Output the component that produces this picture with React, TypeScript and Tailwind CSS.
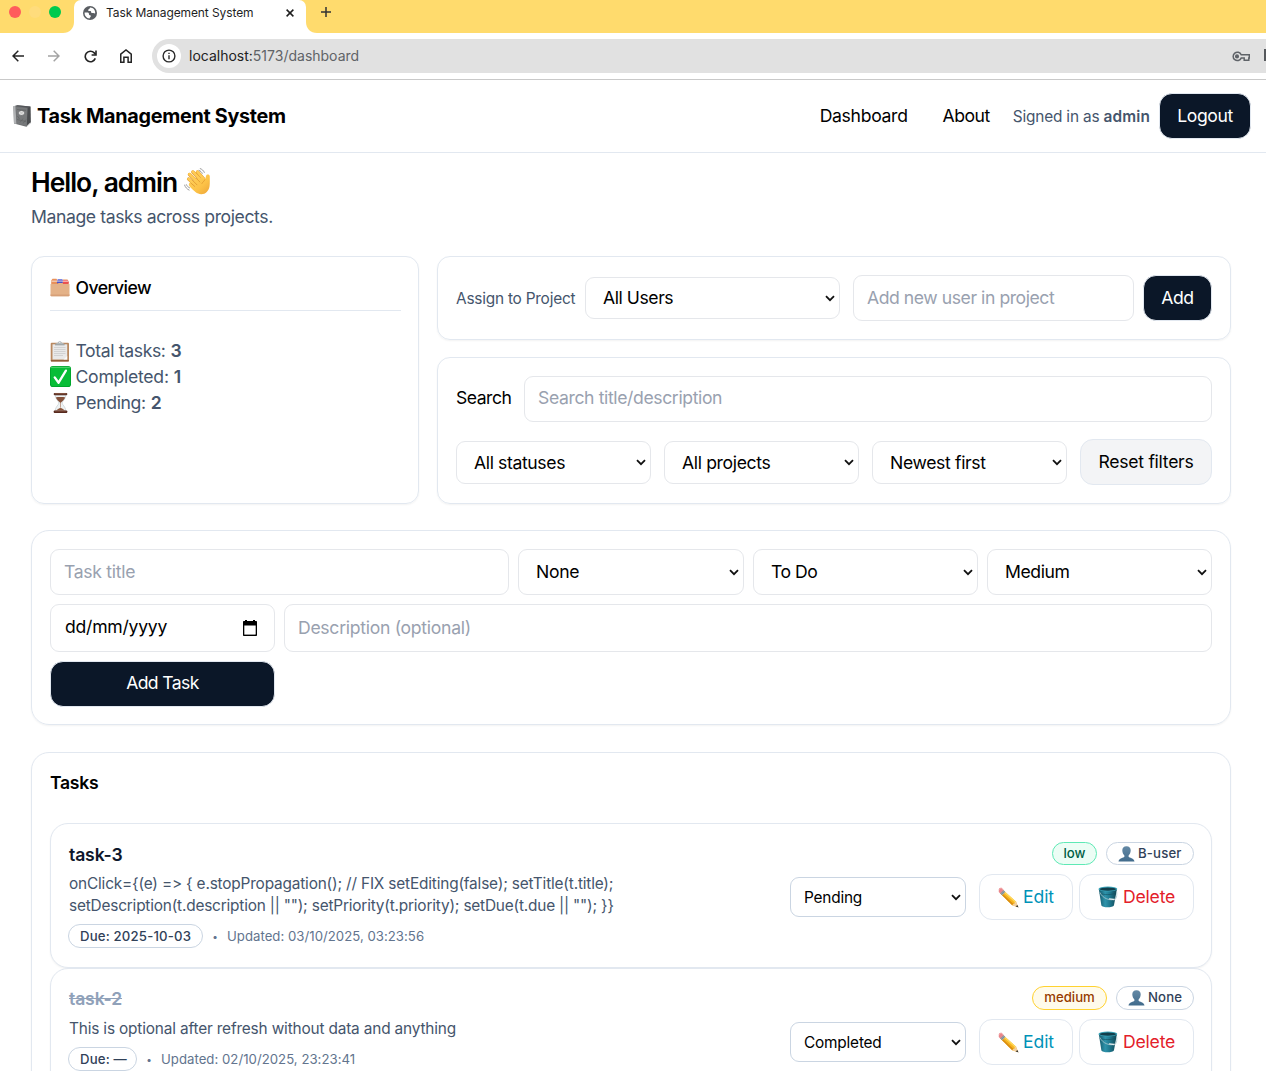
import type { ReactNode } from "react";

/* ---------- browser icons ---------- */

function Globe() {
  return (
    <svg width="14" height="14" viewBox="0 0 14 14">
      <circle cx="7" cy="7" r="7" fill="#5a5e63" />
      <path d="M1.6 6.6h2.8c1 0 1.6.7 1.6 1.6 0 .7.6.9 1.2 1.1.8.3.7 1.4.1 1.9-.5.4-.7.8-.7 1.3C3.500 12.400 1.400 9.800 1.600 6.600z" fill="#fff" />
      <path d="M7 1.500c-.1 1.300-.8 1.500-1.500 1.900-.8.5-.4 1.500.6 1.500h1.100c.5 0 .9.4.9 1s.5 1.100 1.100 1.100h1.200c.7 0 .8.6 1.800.3.300-2.900-1.700-5.800-5.200-5.800z" fill="#fff" />
    </svg>
  );
}

function CloseIcon() {
  return (
    <svg width="8" height="8" viewBox="0 0 8 8" stroke="#1f1f1f" strokeWidth="1.500">
      <path d="M.6.600 7.400 7.400M7.400.600.600 7.400" />
    </svg>
  );
}

function PlusIcon() {
  return (
    <svg width="10" height="10" viewBox="0 0 10 10" stroke="#333" strokeWidth="1.500">
      <path d="M5 0v10M0 5h10" />
    </svg>
  );
}

function ArrowIcon({ forward = false }: { forward?: boolean }) {
  return (
    <svg
      width="12"
      height="12"
      viewBox="0 0 12 12"
      fill="none"
      stroke={forward ? "#a3a3a3" : "#242424"}
      strokeWidth="1.500"
      className={forward ? "rotate-180" : ""}
    >
      <path d="M12 6H1.200M6.300.700 1 6l5.300 5.300" />
    </svg>
  );
}

function ReloadIcon() {
  return (
    <svg width="13" height="13" viewBox="0 0 13 13" fill="none" stroke="#242424" strokeWidth="1.600">
      <path d="M11.300 8.400A5.200 5.200 0 1 1 10.200 2.900L11.600 4.400" />
      <path d="M12 .6V5H7.600" />
    </svg>
  );
}

function HomeIcon() {
  return (
    <svg width="12" height="14" viewBox="0 0 12 14" fill="none" stroke="#242424" strokeWidth="1.500">
      <path d="M.75 5.100 6 1l5.250 4.100v8.100H8.100V8.300H3.900v4.900H.75z" />
    </svg>
  );
}

function InfoIcon() {
  return (
    <svg width="14" height="14" viewBox="0 0 14 14" fill="none" stroke="#2b2b2b" strokeWidth="1.400">
      <circle cx="7" cy="7" r="5.900" />
      <path d="M7 6.200v4M7 3.700v1.400" />
    </svg>
  );
}

function KeyIcon() {
  return (
    <svg width="18" height="11" viewBox="0 0 18 11" fill="none" stroke="#5f6368" strokeWidth="1.500">
      <path d="M9.200 3.700A4.200 4.200 0 1 0 9.200 7.100H12.200V9.300H16.800V6.900H17.300V3.700z" />
      <circle cx="5" cy="5.400" r="1.300" fill="#5f6368" />
    </svg>
  );
}

function TabFlare({ side }: { side: "left" | "right" }) {
  return (
    <svg width="11" height="11" viewBox="0 0 11 11" className="self-end" fill="#fff">
      <path d={side === "left" ? "M11 0v11H0C6.500 11 11 6.500 11 0z" : "M0 0v11h11C4.500 11 0 6.500 0 0z"} />
    </svg>
  );
}

/* ---------- pictographs ---------- */

function Notebook() {
  return (
    <svg width="18" height="22" viewBox="0 0 18 22">
      <path d="M.4 1.200 4.500.300 17.400 1.600 17.700 17.800 13.400 21.700 1 18.600z" fill="#6c6e70" />
      <path d="M.4 1.200 2.400.800 3.500 19.100 1 18.600z" fill="#b0b2b4" />
      <path d="M2.400 1 4.500.300 17.400 1.600 14.600 2.700z" fill="#54565a" />
      <path d="M14.600 2.700 17.400 1.600 17.700 17.800 13.800 21.400z" fill="#4a4c4f" />
      <path d="M14 20.900 17.500 17.500" stroke="#c4c4c4" strokeWidth=".9" />
      <path d="M3 1.900 14.300 3.200 13.600 20.900 3.900 18.500z" fill="#77797b" />
      <path d="M4 14.500 13 16.500M4 4.500l9 .800M7 17.500l3-4M10 18.500l3-4M4.500 11l2 3" stroke="#626466" strokeWidth=".8" />
      <ellipse cx="8.500" cy="8" rx="3" ry="2.300" fill="#ededed" stroke="#4e5052" strokeWidth=".5" />
      <path d="M7 7.600h3M7.400 8.600h2.200" stroke="#a5a5a5" strokeWidth=".5" />
    </svg>
  );
}

function WavingHand() {
  return (
    <svg width="27" height="27" viewBox="0 0 28 28" fill="none" strokeLinecap="round">
      <defs>
        <linearGradient id="skin" x1="0" y1="0" x2="1" y2="1">
          <stop offset="0" stopColor="#ffd35e" />
          <stop offset=".6" stopColor="#fcc247" />
          <stop offset="1" stopColor="#eda437" />
        </linearGradient>
      </defs>
      <path d="M4.800 11.500 13 18.500M5.700 6.700 15 15.500M9.200 4.100 18 13M14 4.100 20.500 11.500" stroke="#df962f" strokeWidth="3.500" />
      <path d="M4.700 11.200 13 18.500M5.600 6.400 15 15.500M9.100 3.800 18 13M13.900 3.800 20.500 11.500" stroke="#ffcc55" strokeWidth="2.700" />
      <path
        d="M7.500 15 12 11.500l6.500-1.500 3 2.200c1-1.300.9-2.800 1.400-4.200.7-2 3.800-1.600 3.800.5 0 3.500.3 7-.2 10.300-.8 5-4.200 8.400-8.700 8.300-4.200-.1-7.600-3.500-12.100-8.300-1.600-1.800.2-4.900 1.800-3.800z"
        fill="url(#skin)"
      />
      <path d="M7 15.500 11 19M9 13l4.500 4.500M12.500 10.500l4 4M21.500 12.300c-.5 1.700-2.200 2.100-2.900 3.700" stroke="#dc932c" strokeWidth=".8" />
      <path d="M16.800.6c1.900.7 3.500 2 4.300 4M15.600 2.500c1.700.7 2.700 1.600 3.300 3.100M.6 17.700c.7 2.200 2.400 4.200 4.700 5.200M2.500 17.300c.7 1.600 1.700 2.500 3.300 3.300" stroke="#8d8d8d" strokeWidth=".9" />
    </svg>
  );
}

function Dividers() {
  return (
    <svg width="20" height="19" viewBox="0 0 20 19">
      <path d="M1.200 2.600 2.500.800H6.500L7.500 2.600H12L13 1.500H17.500L18.600 3.500V8H1.200z" fill="#e8915b" />
      <path d="M7.600 1.200h4.700l1 2v1.500H6.800z" fill="#5661d6" />
      <path d="M13.200 1.900h4.500l1 2v1.700h-6z" fill="#ee5757" />
      <path d="M1.500 2.700h17v.9h-17z" fill="#f7e8df" />
      <path d="M7 3.800h5.200v1.500H7z" fill="#4b53c8" />
      <path d="M13 4.300h5.300v1.500H13z" fill="#e94e50" />
      <path d="M.5 6h7.300l1-.9h3.500l.8.9h6.400v11.300c0 .6-.3.900-.9.900H1.400c-.6 0-.9-.3-.9-.9z" fill="#e4b288" />
      <path d="M.5 16.500h19v.8c0 .6-.3.900-.9.900H1.400c-.6 0-.9-.3-.9-.9z" fill="#d7a078" />
    </svg>
  );
}

function Clipboard() {
  return (
    <svg width="20" height="21" viewBox="0 0 20 21">
      <rect x=".7" y="1.800" width="18.300" height="18.800" rx="1" fill="#b98961" />
      <path d="M.9 19h17.900v.9c0 .4-.2.700-.7.700H1.600c-.4 0-.7-.3-.7-.7z" fill="#8f5c38" />
      <path d="M2.500 3.300h14.700v15.200H2.500z" fill="#e9e9e9" />
      <path d="M4 6.500h11.500M4 8.500h11.500M4 10.500h11.500M4 12.500h11.500M4 14.500h9" stroke="#cfcfcf" strokeWidth=".9" />
      <path d="M13.500 18.500l3.700-3.500v3.500z" fill="#fafafa" />
      <path d="M5 3.800c0-1.200 1-1.700 2.500-1.800C8 .8 8.800.3 9.800.3s1.800.5 2.300 1.700c1.500.1 2.500.6 2.500 1.800z" fill="#b3babd" />
      <path d="M5 3.400h9.600v.9H5z" fill="#8f979b" />
      <circle cx="9.800" cy="1.500" r=".6" fill="#fff" />
    </svg>
  );
}

function CheckMark() {
  return (
    <svg width="21" height="21" viewBox="0 0 21 21">
      <rect width="21" height="21" rx="2.800" fill="#00a52c" />
      <rect x=".9" y=".9" width="19.200" height="19.200" rx="2.200" fill="#08bd37" />
      <path d="M1.500 1.300h18" stroke="#62d97e" strokeWidth=".9" strokeLinecap="round" />
      <path d="M4.700 11.400 8.600 16.700 15.900 4.600" fill="none" stroke="#fff" strokeWidth="2.300" strokeLinecap="round" strokeLinejoin="round" />
    </svg>
  );
}

function Hourglass() {
  return (
    <svg width="15" height="22" viewBox="0 0 16 22">
      <path d="M2.300 2.500C2.300 7 6.300 9 6.300 11S2.300 15 2.300 19.500h11.400c0-4.500-4-6.500-4-8.500s4-4 4-8.500z" fill="#eef2f3" stroke="#bcc6ca" strokeWidth=".6" />
      <path d="M3 5.200c1.700-.7 8.300-.7 10 0-.7 2.500-3.500 4-4.700 5.600h-.6C6.500 9.200 3.700 7.700 3 5.200z" fill="#84513a" />
      <path d="M8 10v6" stroke="#9c6347" strokeWidth=".6" />
      <path d="M3.500 19c.8-1.400 2.900-2.500 4.500-2.800 1.600.3 3.700 1.400 4.500 2.800z" fill="#8d563b" />
      <rect x=".8" y=".2" width="14.400" height="2.400" rx=".8" fill="#633729" />
      <rect x=".8" y="19" width="14.400" height="2.600" rx=".8" fill="#56291e" />
      <path d="M2.200.8h11.500M2.200 19.700h11.500" stroke="#9a6550" strokeWidth=".6" />
    </svg>
  );
}

function Person() {
  return (
    <svg width="17" height="16" viewBox="0 0 17 16" className="shrink-0">
      <defs>
        <linearGradient id="bust" x1="0" y1="0" x2="0" y2="1">
          <stop offset="0" stopColor="#6489a5" />
          <stop offset="1" stopColor="#416b8c" />
        </linearGradient>
      </defs>
      <path
        d="M8.500.3c2.800 0 4.300 1.800 4.200 4.300-.1 2.300-1 4-2.100 4.900v1.200c.4 1 5.700 1.300 5.900 4.900H.5c.2-3.600 5.500-3.900 5.900-4.900V9.500C5.300 8.600 4.400 6.900 4.300 4.600 4.200 2.100 5.700.3 8.500.3z"
        fill="url(#bust)"
      />
    </svg>
  );
}

function Pencil() {
  return (
    <svg width="21" height="21" viewBox="0 0 21 21">
      <path d="M5.300 3.300 17.900 14.500 20.300 20.300 14.200 18.300 2.300 6.600z" fill="#f7b520" />
      <path d="M5.300 3.300 17.900 14.500 16.900 15.500 4.400 4.300z" fill="#ffd95a" />
      <path d="M3.300 5.500 15.500 17.100 14.200 18.300 2.300 6.600z" fill="#d98d12" />
      <path d="M17.900 14.500 20.300 20.300 14.200 18.300 15.300 16.900 16.500 16.700 16.700 15.300z" fill="#f2d0a2" />
      <path d="M19.300 17.900 20.600 20.600 17.700 19.500z" fill="#303030" />
      <path d="M5 2.800 7.400 4.900 4.200 8.200 2 6.200z" fill="#9caab3" />
      <path d="M5.700 3.500 2.700 6.800M6.600 4.300 3.500 7.500" stroke="#617078" strokeWidth=".5" />
      <path d="M.8 3.500C.3 1.800 2 .4 3.700 1L5.700 2.900 2.200 6.500 1 5.300C.6 4.800.8 4.100.8 3.500z" fill="#e9868b" />
      <path d="M1.300 2.900C1.600 1.700 2.600 1.100 3.600 1.300L5 2.600" stroke="#f9b4b4" strokeWidth=".7" fill="none" />
    </svg>
  );
}

function Bucket() {
  return (
    <svg width="20" height="22" viewBox="0 0 20 22">
      <defs>
        <linearGradient id="steel" x1="0" y1="0" x2="1" y2="0">
          <stop offset="0" stopColor="#14586a" />
          <stop offset=".35" stopColor="#2e93ab" />
          <stop offset=".6" stopColor="#1f7990" />
          <stop offset="1" stopColor="#104552" />
        </linearGradient>
      </defs>
      <path d="M.8 3 3.400 19.400C4.200 21.800 15 21.800 15.900 19.400L19 3z" fill="url(#steel)" />
      <ellipse cx="9.900" cy="3" rx="9.400" ry="2.400" fill="#3aa3b8" />
      <ellipse cx="9.900" cy="3.200" rx="8.100" ry="1.600" fill="#123e4b" />
      <path d="M1.700 7.200C6 9.200 13.500 9 18.300 7" stroke="#124e5d" strokeWidth=".6" fill="none" />
      <path d="M2 6.500C4.500 12.500 12.500 15.500 17.700 12.700 18.900 11.500 18.900 8 18.700 5.500" stroke="#a9c8ce" strokeWidth=".8" fill="none" />
      <path d="M11.500 12.800 16 13.500" stroke="#dfe9eb" strokeWidth="1.300" strokeLinecap="round" />
    </svg>
  );
}

/* ---------- controls ---------- */

function Chevron() {
  return (
    <svg width="10" height="7" viewBox="0 0 10 7" fill="none" stroke="#111" strokeWidth="1.800" className="shrink-0">
      <path d="M1 1.200 5 5.200 9 1.200" />
    </svg>
  );
}

function Select({ label, className }: { label: string; className: string }) {
  return (
    <button className={`flex shrink-0 items-center justify-between rounded-[9px] border bg-white pr-[4px] text-left ${className}`}>
      <span>{label}</span>
      <Chevron />
    </button>
  );
}

function Input({ placeholder, className }: { placeholder: string; className: string }) {
  return (
    <input
      placeholder={placeholder}
      className={`block min-w-0 rounded-[9px] border border-gray-200 bg-white pr-[14px] pb-[2px] pl-[13px] placeholder:text-gray-400 ${className}`}
    />
  );
}

function PrimaryButton({ children, className }: { children: ReactNode; className: string }) {
  return (
    <button className={`shrink-0 rounded-[13px] border border-slate-200 bg-[#0b1728] text-center text-white ${className}`}>
      {children}
    </button>
  );
}

type Task = {
  title: string;
  done: boolean;
  lines: { text: string; className: string }[];
  due: string;
  dueClass: string;
  updated: string;
  priority: string;
  priorityClass: string;
  user: string;
  userClass: string;
  status: string;
  cardClass: string;
  pillsClass: string;
};

const tasks: Task[] = [
  {
    title: "task-3",
    done: false,
    lines: [
      { text: "onClick={(e) => { e.stopPropagation(); // FIX setEditing(false); setTitle(t.title);", className: "tracking-[-0.177px]" },
      { text: 'setDescription(t.description || ""); setPriority(t.priority); setDue(t.due || ""); }}', className: "tracking-[-0.194px]" },
    ],
    due: "2025-10-03",
    dueClass: "w-[135px]",
    updated: "03/10/2025, 03:23:56",
    priority: "low",
    priorityClass: "w-[45px] border-[#5ee9b5] bg-emerald-50 text-[#006045]",
    user: "B-user",
    userClass: "w-[88px]",
    status: "Pending",
    cardClass: "h-[145px]",
    pillsClass: "mt-px h-[23px]",
  },
  {
    title: "task-2",
    done: true,
    lines: [{ text: "This is optional after refresh without data and anything", className: "tracking-[-0.169px]" }],
    due: "—",
    dueClass: "w-[69px]",
    updated: "02/10/2025, 23:23:41",
    priority: "medium",
    priorityClass: "w-[75px] border-[#ffd230] bg-amber-50 text-[#973c00]",
    user: "None",
    userClass: "w-[78px]",
    status: "Completed",
    cardClass: "h-[124px]",
    pillsClass: "h-[24px]",
  },
];

function TaskCard({ task }: { task: Task }) {
  return (
    <article className={`flex justify-between rounded-[18px] border border-slate-200 bg-white pt-[17px] pr-[17px] pl-[17px] shadow-xs ${task.cardClass}`}>
      <div>
        <h3
          className={`h-[26px] pl-px font-semibold tracking-[-0.139px] ${
            task.done ? "leading-[25px] text-slate-400 line-through" : "leading-[27px] text-slate-900"
          }`}
        >
          {task.title}
        </h3>
        <div className="mt-[6px] pl-px text-[15.4px] leading-[22px] text-slate-600 [font-variant-ligatures:none] [font-feature-settings:'calt'_0]">
          {task.lines.map((line) => (
            <p key={line.text} className={`whitespace-nowrap ${line.className}`}>
              {line.text}
            </p>
          ))}
        </div>
        <div className="mt-[6px] flex h-[26px] items-center text-[13.2px] text-slate-500">
          <span className={`flex h-[24px] items-center rounded-full border border-slate-300 pb-px pl-[11px] font-medium tracking-[0.17px] text-slate-700 ${task.dueClass}`}>
            Due: {task.due}
          </span>
          <span className="w-[24px] text-center text-[10px]">•</span>
          <span className="pb-px tracking-[0.02px]">Updated: {task.updated}</span>
        </div>
      </div>
      <div className="flex flex-col items-end">
        <div className={`flex items-stretch gap-[9px] text-[13.2px] font-medium ${task.pillsClass}`}>
          <span className={`flex items-center justify-center rounded-full border leading-none ${task.priorityClass}`}>
            {task.priority}
          </span>
          <span className={`flex items-center gap-[3px] rounded-full border border-slate-300 pl-[11px] leading-none tracking-[0.15px] text-slate-700 ${task.userClass}`}>
            <Person />
            {task.user}
          </span>
        </div>
        <div className="mt-[9px] flex items-center">
          <Select label={task.status} className="mr-[13px] h-[40px] w-[176px] border-slate-300 pt-px pl-[13px] text-[15.4px] tracking-[-0.2px]" />
          <button className="mr-[6px] flex h-[46px] w-[94px] items-center rounded-[13px] border border-slate-200 pl-[18px] tracking-[-0.1px] text-[#0092b8]">
            <Pencil />
            <span className="ml-[4px]">Edit</span>
          </button>
          <button className="flex h-[46px] w-[115px] items-center rounded-[13px] border border-slate-200 pl-[18px] tracking-[-0.2px] text-[#e3202a]">
            <Bucket />
            <span className="ml-[5px]">Delete</span>
          </button>
        </div>
      </div>
    </article>
  );
}

function BrowserChrome() {
  return (
    <div>
      <div className="flex h-[33px] bg-[#ffdb6d]">
        <div className="flex w-[63px] items-start gap-[8px] pt-[6px] pl-[9px]">
          <i className="size-[12px] shrink-0 rounded-full bg-[#ff5c5c]" />
          <i className="size-[12px] shrink-0 rounded-full bg-[#ffdc7c]" />
          <i className="size-[12px] shrink-0 rounded-full bg-[#00ca4e]" />
        </div>
        <TabFlare side="left" />
        <div className="flex h-[33px] w-[232px] items-start rounded-t-[7px] bg-white pt-[6px] pl-[9px] text-[12px] leading-[14px] text-[#1f1f1f]">
          <Globe />
          <span className="ml-[9px] w-[180px] whitespace-nowrap tracking-[-0.1px]">Task Management System</span>
          <span className="pt-[3px]">
            <CloseIcon />
          </span>
        </div>
        <TabFlare side="right" />
        <span className="pt-[7px] pl-[4px]">
          <PlusIcon />
        </span>
      </div>
      <div className="flex h-[47px] items-center border-b border-[#c9c9c9] bg-white">
        <div className="flex w-[152px] items-center pl-[12px]">
          <ArrowIcon />
          <span className="ml-[24px]">
            <ArrowIcon forward />
          </span>
          <span className="ml-[24px]">
            <ReloadIcon />
          </span>
          <span className="ml-[23px]">
            <HomeIcon />
          </span>
        </div>
        <div className="flex h-[34px] flex-1 items-center rounded-l-full bg-[#e1e1e1] pl-[5px] text-[14px]">
          <span className="flex size-[24px] items-center justify-center rounded-full bg-white">
            <InfoIcon />
          </span>
          <span className="ml-[8px] flex-1 text-[#606367]">
            <span className="text-[#222]">localhost:</span>5173/dashboard
          </span>
          <KeyIcon />
          <span className="mb-[3px] ml-[14px] h-[12px] w-[2px] bg-[#55585c]" />
        </div>
      </div>
    </div>
  );
}

export default function App() {
  return (
    <div className="h-[1071px] w-[1266px] overflow-hidden bg-white font-['Inter',sans-serif] text-[17.6px] leading-[26px] text-black">
      <BrowserChrome />

      <header className="flex h-[73px] items-center border-b border-slate-200 pr-[15px] pl-[13px]">
        <Notebook />
        <h1 className="ml-[6px] flex-1 text-[19.8px] font-bold tracking-[-0.3px]">Task Management System</h1>
        <nav className="flex items-center">
          <a className="mr-[35px] tracking-[-0.31px]">Dashboard</a>
          <a className="mr-[23px] tracking-[-0.5px]">About</a>
        </nav>
        <span className="mr-[9px] pt-[2px] text-[15.4px] tracking-[-0.18px] text-slate-600">
          Signed in as <b className="font-semibold tracking-[0.15px]">admin</b>
        </span>
        <PrimaryButton className="h-[46px] w-[92px] tracking-[-0.4px]">Logout</PrimaryButton>
      </header>

      <main className="pt-[11px] pr-[35px] pl-[31px]">
        <h2 className="flex h-[36px] items-center pb-px text-[26.4px] font-semibold tracking-[-1px]">
          <span className="w-[153px]">Hello, admin</span>
          <WavingHand />
        </h2>
        <p className="mt-[4px] tracking-[-0.4px] text-slate-600">Manage tasks across projects.</p>

        <div className="mt-[26px] flex gap-[18px]">
          <section className="h-[248px] w-[388px] shrink-0 rounded-[13px] border border-slate-200 pt-[18px] pr-[17px] pl-[18px] shadow-xs">
            <h3 className="flex h-[36px] items-start border-b border-slate-200 font-medium tracking-[-0.55px]">
              <span className="mt-[3px] w-[25.5px]">
                <Dividers />
              </span>
              Overview
            </h3>
            <ul className="mt-[27px] text-slate-600">
              <li className="flex h-[26px] items-center tracking-[-0.37px]">
                <span className="w-[25.5px]">
                  <Clipboard />
                </span>
                Total tasks:<b className="ml-[5px] font-semibold">3</b>
              </li>
              <li className="flex h-[26px] items-center tracking-[-0.26px]">
                <span className="w-[25.5px] pb-px">
                  <CheckMark />
                </span>
                Completed:<b className="ml-[5px] font-semibold">1</b>
              </li>
              <li className="flex h-[26px] items-center tracking-[-0.36px]">
                <span className="w-[25.5px] pl-[3px]">
                  <Hourglass />
                </span>
                Pending:<b className="ml-[5px] font-semibold">2</b>
              </li>
            </ul>
          </section>

          <div className="flex min-w-0 flex-1 flex-col gap-[17px]">
            <section className="flex h-[84px] items-center rounded-[13px] border border-slate-200 px-[18px] shadow-xs">
              <span className="w-[129px] shrink-0 pt-[2px] text-[15.4px] tracking-[-0.22px] whitespace-nowrap text-slate-600">Assign to Project</span>
              <Select label="All Users" className="h-[42px] w-[255px] border-gray-200 pl-[17px] tracking-[-0.44px]" />
              <Input placeholder="Add new user in project" className="ml-[13px] h-[46px] flex-1 tracking-[-0.44px]" />
              <PrimaryButton className="ml-[9px] h-[46px] w-[69px] tracking-[-0.4px]">Add</PrimaryButton>
            </section>
            <section className="h-[147px] rounded-[13px] border border-slate-200 px-[18px] pt-[18px] shadow-xs">
              <div className="flex items-center">
                <span className="w-[68px] pb-[2px] tracking-[-0.5px]">Search</span>
                <Input placeholder="Search title/description" className="h-[46px] flex-1 pb-[3px] tracking-[-0.38px]" />
              </div>
              <div className="mt-[17px] flex items-center gap-[13px]">
                <Select label="All statuses" className="h-[43px] w-[195px] border-gray-200 pt-px pl-[17px] tracking-[-0.38px]" />
                <Select label="All projects" className="h-[43px] w-[195px] border-gray-200 pt-px pl-[17px] tracking-[-0.36px]" />
                <Select label="Newest first" className="h-[43px] w-[195px] border-gray-200 pt-px pl-[17px] tracking-[-0.36px]" />
                <button className="h-[46px] flex-1 rounded-[13px] border border-slate-200 bg-gray-100 tracking-[-0.28px] whitespace-nowrap">Reset filters</button>
              </div>
            </section>
          </div>
        </div>

        <section className="mt-[26px] grid h-[195px] grid-cols-[225px_225px_226px_225px_225px] content-start gap-x-[9px] gap-y-[9px] rounded-[18px] border border-slate-200 px-[18px] pt-[18px] shadow-xs">
          <Input placeholder="Task title" className="col-span-2 h-[46px] tracking-[-0.3px]" />
          <Select label="None" className="h-[46px] border-gray-200 pl-[17px] tracking-[-0.3px]" />
          <Select label="To Do" className="h-[46px] border-gray-200 pl-[17px] tracking-[-0.5px]" />
          <Select label="Medium" className="h-[46px] border-gray-200 pl-[17px] tracking-[-0.4px]" />
          <div className="flex h-[48px] items-center justify-between rounded-[9px] border border-gray-200 pr-[17px] pl-[14px] tracking-[-0.25px]">
            <span className="pb-[2px]">dd/mm/yyyy</span>
            <svg width="14" height="16" viewBox="0 0 14 16">
              <path d="M2 0h2v1h6V0h2v1h1c.600 0 1 .400 1 1v13c0 .600-.400 1-1 1H1c-.600 0-1-.400-1-1V2c0-.600.400-1 1-1h1z" fill="#000" />
              <path d="M1.300 5.500h11.400v9.100H1.300z" fill="#fff" />
            </svg>
          </div>
          <Input placeholder="Description (optional)" className="col-span-4 h-[48px] tracking-[-0.29px]" />
          <PrimaryButton className="h-[46px] pb-[2px] tracking-[-0.6px]">Add Task</PrimaryButton>
        </section>

        <section className="mt-[27px] h-[400px] rounded-[18px] border border-slate-200 px-[18px] pt-[17px] shadow-xs">
          <h3 className="font-semibold tracking-[-0.28px]">Tasks</h3>
          <div className="mt-[27px]">
            {tasks.map((task) => (
              <TaskCard key={task.title} task={task} />
            ))}
          </div>
        </section>
      </main>
    </div>
  );
}
